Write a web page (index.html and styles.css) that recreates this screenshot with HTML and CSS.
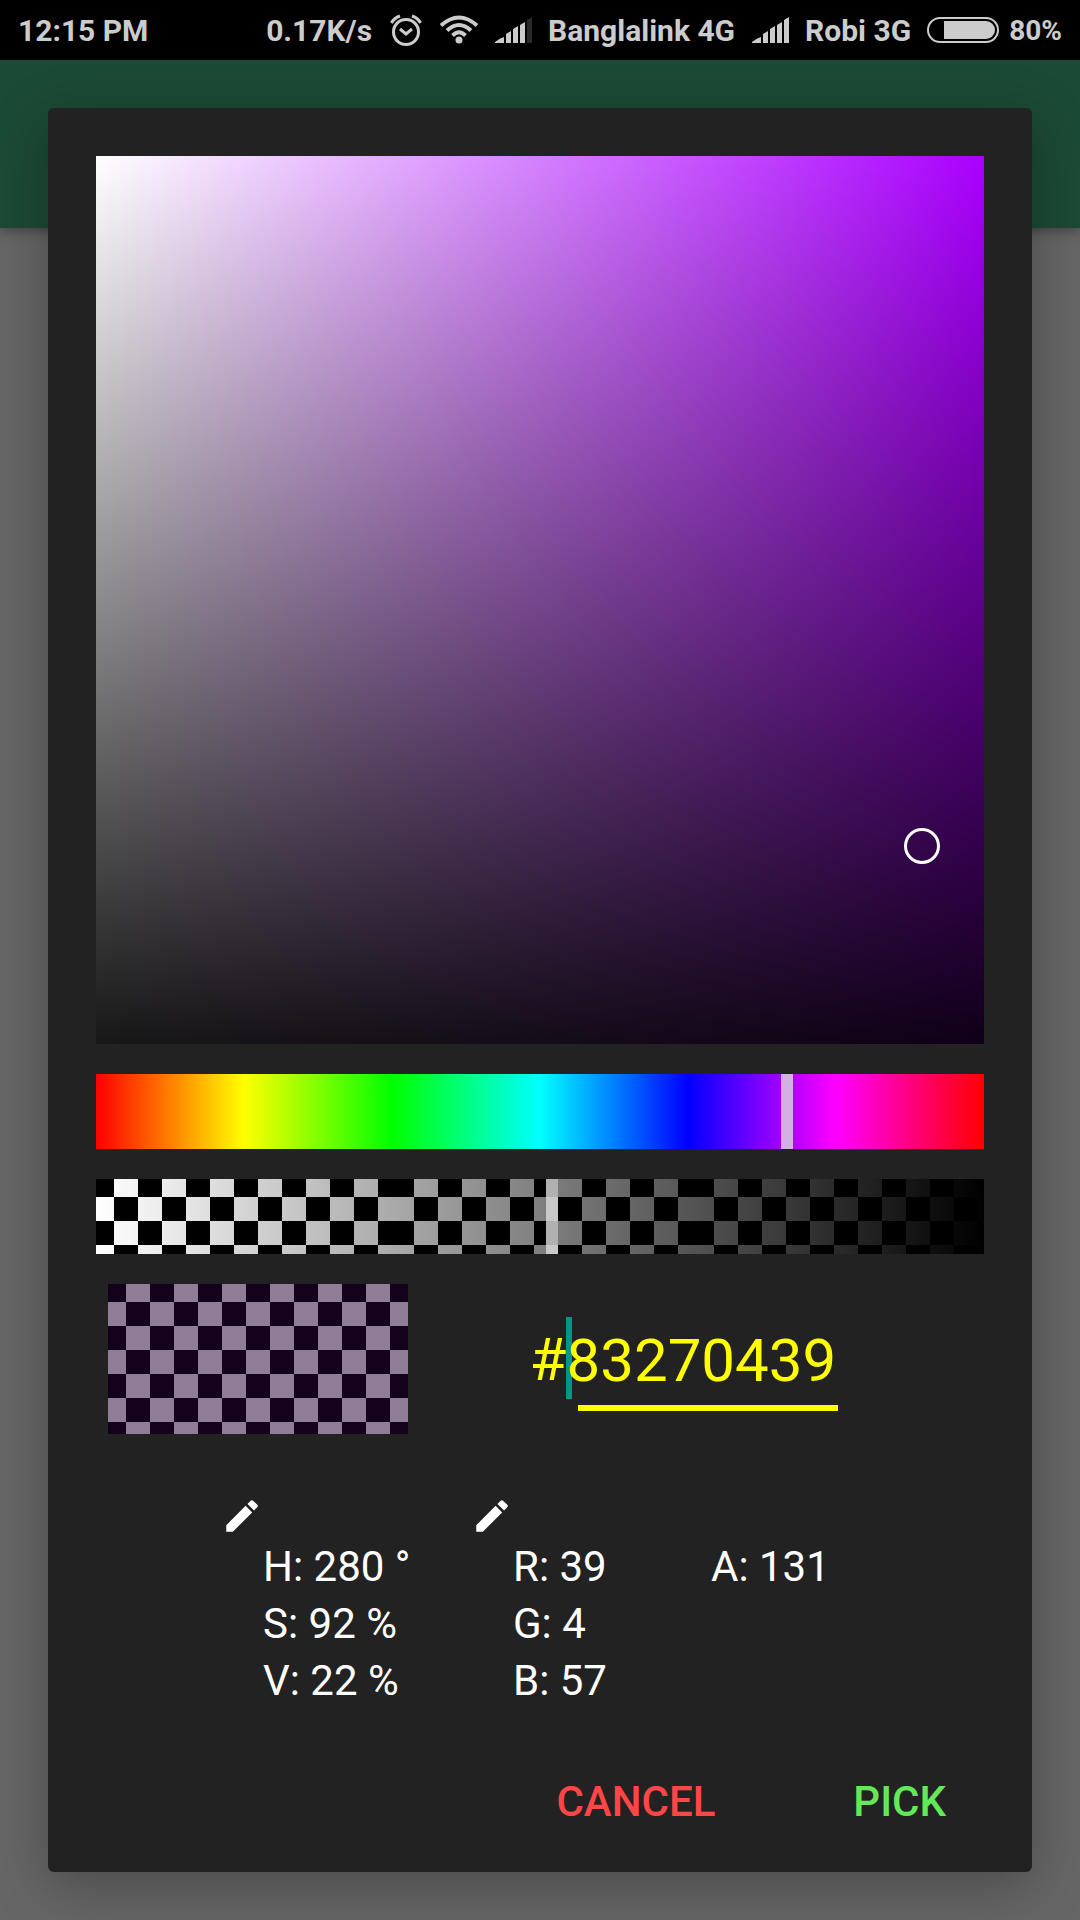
FILE: index.html
```
<!DOCTYPE html>
<html lang="en">
<head>
<meta charset="utf-8">
<meta name="viewport" content="width=device-width, initial-scale=1">
<title>Color picker</title>
<link rel="stylesheet" href="styles.css">
</head>
<body>
<header class="status">
  <span class="clock">12:15 PM</span>
  <span class="speed">0.17K/s</span>
  <svg class="alarm" viewBox="0 0 34 34" aria-hidden="true">
    <circle cx="17" cy="19" r="12.500" fill="none" stroke="currentColor" stroke-width="3"/>
    <path d="M11 16l6 5 6-5" fill="none" stroke="currentColor" stroke-width="3"/>
    <path d="M2.500 10Q5 5 11 3M31.500 10Q29 5 23 3" fill="none" stroke="currentColor" stroke-width="3"/>
  </svg>
  <svg class="wifi" viewBox="0 0 38 30" aria-hidden="true">
    <g fill="none" stroke="currentColor" stroke-width="4">
      <path d="M1 10.500Q19-5.500 37 10.500"/>
      <path d="M7 15.500Q19 4.500 31 15.500"/>
      <path d="M12.500 20.500Q19 14 25.500 20.500"/>
    </g>
    <circle cx="19" cy="25" r="3.500" fill="currentColor"/>
  </svg>
  <svg class="signal" viewBox="0 0 36 26" aria-hidden="true">
    <path d="M0 25q5-4 9-5v6H0zM11 17l5-3v12h-5zM18 12l5-3v17h-5zM25 8l5-3v21h-5z" fill="currentColor"/>
    <path d="M32 3l5-3v26h-5z" fill="#2a2a2a"/>
  </svg>
  <span class="carrier">Banglalink 4G</span>
  <svg class="signal" viewBox="0 0 36 26" aria-hidden="true">
    <path d="M0 25q5-4 9-5v6H0zM11 17l5-3v12h-5zM18 12l5-3v17h-5zM25 8l5-3v21h-5zM32 3l5-3v26h-5z" fill="currentColor"/>
  </svg>
  <span class="carrier">Robi 3G</span>
  <svg class="battery" viewBox="0 0 72 26" aria-hidden="true">
    <rect x="1" y="1" width="70" height="24" rx="12" fill="none" stroke="currentColor" stroke-width="2"/>
    <path d="M17 4h42a9 9 0 0 1 0 18H17z" fill="currentColor"/>
  </svg>
  <span class="charge">80%</span>
</header>
<div class="backdrop">
  <div class="appbar"></div>
  <main class="dialog" role="dialog" aria-label="Pick a color">
    <div class="field"><span class="thumb"></span></div>
    <div class="bar hue"><span class="handle handle-hue"></span></div>
    <div class="bar alpha">
      <div class="tile checker"></div><div class="tile checker"></div><div class="tile checker"></div>
      <span class="handle handle-alpha"></span>
    </div>
    <div class="row">
      <div class="preview checker"></div>
      <div class="hex">
        <label for="hex">#</label>
        <input id="hex" type="text" value="83270439" maxlength="8">
      </div>
    </div>
    <div class="values">
      <section class="group">
        <button class="edit" type="button" aria-label="Edit HSV"><svg viewBox="0 0 24 24"><path d="M3 17.250V21h3.750L17.810 9.940l-3.750-3.750L3 17.250zM20.710 7.040a1 1 0 0 0 0-1.410l-2.340-2.340a1 1 0 0 0-1.410 0l-1.830 1.830 3.750 3.750 1.830-1.830z"/></svg></button>
        <p>H: 280 °</p><p>S: 92 %</p><p>V: 22 %</p>
      </section>
      <section class="group">
        <button class="edit" type="button" aria-label="Edit RGB"><svg viewBox="0 0 24 24"><path d="M3 17.250V21h3.750L17.810 9.940l-3.750-3.750L3 17.250zM20.710 7.040a1 1 0 0 0 0-1.410l-2.340-2.340a1 1 0 0 0-1.410 0l-1.830 1.830 3.750 3.750 1.830-1.830z"/></svg></button>
        <p>R: 39</p><p>G: 4</p><p>B: 57</p>
      </section>
      <section class="group group-alpha">
        <p>A: 131</p>
      </section>
    </div>
    <div class="actions">
      <button class="action cancel" type="button">CANCEL</button>
      <button class="action pick" type="button">PICK</button>
    </div>
  </main>
</div>
</body>
</html>
```
FILE: styles.css
```
* { box-sizing: border-box; }
body {
  margin: 0;
  min-height: 100vh;
  display: flex;
  flex-direction: column;
  background: #666;
  color: #fff;
  font-family: Roboto, "Liberation Sans", sans-serif;
}
button { border: 0; padding: 0; background: none; font: inherit; }
p { margin: 0; }

.status {
  display: flex;
  align-items: center;
  height: 60px;
  padding: 0 18px;
  background: #000;
  color: #ccc;
  font-size: 30px;
  font-weight: 700;
  white-space: nowrap;
}
.status svg { flex: none; overflow: visible; }
.clock { margin-right: auto; }
.alarm { width: 34px; height: 34px; margin-left: 17px; }
.wifi { width: 38px; height: 30px; margin-left: 17px; }
.signal { width: 36px; height: 26px; margin: 0 17px; }
.battery { width: 72px; height: 26px; margin: 0 10px 0 16px; }
.charge { font-size: 28px; }

.backdrop {
  flex: 1;
  display: grid;
  grid-template-columns: minmax(0, 1fr);
  grid-template-rows: 168px 1fr;
  overflow: hidden;
}
.appbar {
  grid-area: 1 / 1;
  background: #1b4a36;
  box-shadow: 0 2px 12px rgba(0, 0, 0, .4);
}
.dialog {
  grid-area: 1 / 1 / 3 / 2;
  z-index: 1;
  display: flex;
  flex-direction: column;
  margin: 48px;
  padding: 48px;
  border-radius: 6px;
  background: #222;
  box-shadow: 0 14px 56px rgba(0, 0, 0, .28);
}

.field {
  position: relative;
  aspect-ratio: 1;
  margin-bottom: 30px;
  background:
    linear-gradient(transparent, rgba(0, 0, 0, .91)),
    linear-gradient(90deg, #fff, #a0f);
}
.thumb {
  position: absolute;
  left: 93%;
  top: 77.7%;
  width: 36px;
  height: 36px;
  margin: -18px 0 0 -18px;
  border: 3px solid #fff;
  border-radius: 50%;
}
.bar {
  position: relative;
  height: 75px;
  margin-bottom: 30px;
}
.hue { background: linear-gradient(90deg, #f00, #ff0, #0f0, #0ff, #00f, #f0f, #f00); }
.alpha { display: flex; overflow: hidden; }
.alpha::after {
  content: "";
  position: absolute;
  inset: 0;
  background: linear-gradient(90deg, transparent, #000);
}
.tile { flex: 0 0 300px; }
.checker {
  background: conic-gradient(#fff 25%, #000 0 50%, #fff 0 75%, #000 0) -6px -6px / 48px 48px;
}
.handle {
  position: absolute;
  z-index: 1;
  top: 0;
  bottom: 0;
  width: 12px;
  margin-left: -6px;
  background: rgba(220, 220, 220, .8);
}
.handle-hue { left: 77.8%; }
.handle-alpha { left: 51.4%; }

.row {
  display: flex;
  align-items: center;
  padding: 0 24px 0 12px;
}
.preview {
  position: relative;
  width: 300px;
  height: 150px;
}
.preview::after {
  content: "";
  position: absolute;
  inset: 0;
  background: rgba(39, 4, 57, .514);
}
.hex {
  flex: 1;
  display: flex;
  justify-content: center;
  padding-top: 10px;
  color: #ff0;
  font-size: 60px;
  line-height: 86px;
}
.hex input {
  width: 272px;
  height: 94px;
  padding: 0 0 8px;
  border: 0;
  outline: 0;
  color: inherit;
  font: inherit;
  background:
    linear-gradient(#ff0, #ff0) right bottom / 260px 6px no-repeat,
    linear-gradient(#009688, #009688) left top / 6px 82px no-repeat;
}

.values {
  display: grid;
  grid-template-columns: 250px 240px 1fr;
  margin-top: 60px;
  padding-left: 125px;
  font-size: 42px;
  line-height: 57px;
}
.group { padding-left: 42px; }
.group-alpha { padding: 44px 0 0; }
.edit {
  display: block;
  width: 42px;
  height: 44px;
  margin-left: -42px;
}
.edit svg { display: block; width: 42px; height: 42px; fill: #fff; }

.actions {
  display: flex;
  justify-content: flex-end;
  gap: 90px;
  margin-top: auto;
  padding-right: 14px;
}
.action {
  height: 44px;
  padding: 0 24px;
  font-size: 42px;
  font-weight: 500;
  line-height: 44px;
}
.cancel { color: #ff4646; }
.pick { color: #63e857; }
```
